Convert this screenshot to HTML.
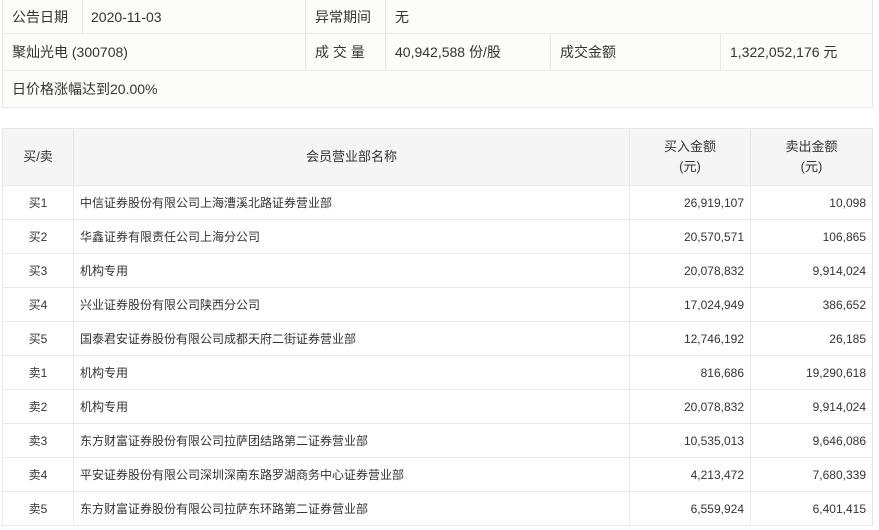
<!DOCTYPE html>
<html><head><meta charset="utf-8"><style>
body{margin:0;background:#fff;font-family:"Liberation Sans","Noto Sans CJK SC",sans-serif;color:#333;width:879px;height:530px;overflow:hidden}
table{border-collapse:collapse;position:absolute;left:2px;table-layout:fixed}
td{border:1px solid #e8e8e8;padding:0}
#t1{top:-1px;width:870px;background:#fcfcfa;font-size:14px}
#t1 td{height:36px;padding-left:9px}
#t1 tr.f td{height:33px}
#t2{top:128px;width:870px;font-size:12px}
#t2 td{height:33px}
#t2 tr.h td{height:56px;background:#f5f5f5;text-align:center;font-size:13px;line-height:20px}
.c{text-align:center}.r{text-align:right;padding-right:6px!important}.l{padding-left:6px!important}
</style></head><body>
<table id="t1">
<colgroup><col style="width:80px"><col style="width:223px"><col style="width:80px"><col style="width:165px"><col style="width:170px"><col style="width:152px"></colgroup>
<tr class="f"><td>公告日期</td><td style="padding-left:8px">2020-11-03</td><td>异常期间</td><td colspan="3">无</td></tr>
<tr><td colspan="2">聚灿光电 (300708)</td><td>成 交 量</td><td>40,942,588 份/股</td><td>成交金额</td><td>1,322,052,176 元</td></tr>
<tr><td colspan="6">日价格涨幅达到20.00%</td></tr>
</table>
<table id="t2">
<colgroup><col style="width:71px"><col style="width:556px"><col style="width:121px"><col style="width:122px"></colgroup>
<tr class="h"><td>买/卖</td><td>会员营业部名称</td><td>买入金额<br>(元)</td><td>卖出金额<br>(元)</td></tr>
<tr><td class="c">买1</td><td class="l">中信证券股份有限公司上海漕溪北路证券营业部</td><td class="r">26,919,107</td><td class="r">10,098</td></tr>
<tr><td class="c">买2</td><td class="l">华鑫证券有限责任公司上海分公司</td><td class="r">20,570,571</td><td class="r">106,865</td></tr>
<tr><td class="c">买3</td><td class="l">机构专用</td><td class="r">20,078,832</td><td class="r">9,914,024</td></tr>
<tr><td class="c">买4</td><td class="l">兴业证券股份有限公司陕西分公司</td><td class="r">17,024,949</td><td class="r">386,652</td></tr>
<tr><td class="c">买5</td><td class="l">国泰君安证券股份有限公司成都天府二街证券营业部</td><td class="r">12,746,192</td><td class="r">26,185</td></tr>
<tr><td class="c">卖1</td><td class="l">机构专用</td><td class="r">816,686</td><td class="r">19,290,618</td></tr>
<tr><td class="c">卖2</td><td class="l">机构专用</td><td class="r">20,078,832</td><td class="r">9,914,024</td></tr>
<tr><td class="c">卖3</td><td class="l">东方财富证券股份有限公司拉萨团结路第二证券营业部</td><td class="r">10,535,013</td><td class="r">9,646,086</td></tr>
<tr><td class="c">卖4</td><td class="l">平安证券股份有限公司深圳深南东路罗湖商务中心证券营业部</td><td class="r">4,213,472</td><td class="r">7,680,339</td></tr>
<tr><td class="c">卖5</td><td class="l">东方财富证券股份有限公司拉萨东环路第二证券营业部</td><td class="r">6,559,924</td><td class="r">6,401,415</td></tr>
</table>
</body></html>
